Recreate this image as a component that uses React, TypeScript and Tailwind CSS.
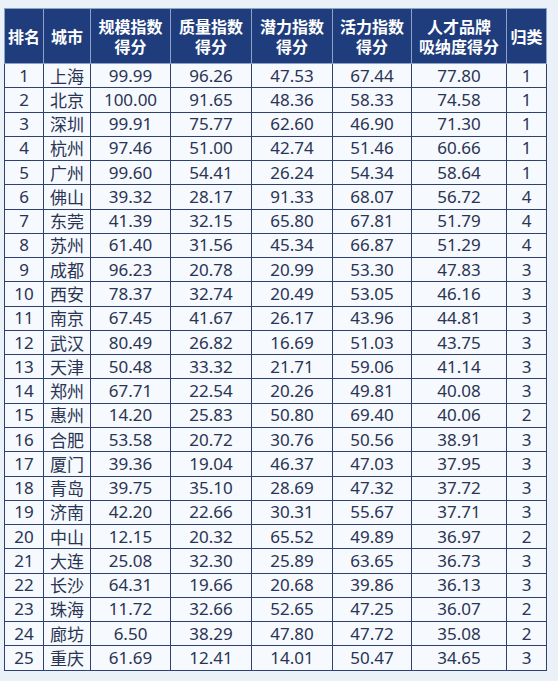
import React from "react";

const rows: [number, string, string, string, string, string, string, number][] = [
  [1, "上海", "99.99", "96.26", "47.53", "67.44", "77.80", 1],
  [2, "北京", "100.00", "91.65", "48.36", "58.33", "74.58", 1],
  [3, "深圳", "99.91", "75.77", "62.60", "46.90", "71.30", 1],
  [4, "杭州", "97.46", "51.00", "42.74", "51.46", "60.66", 1],
  [5, "广州", "99.60", "54.41", "26.24", "54.34", "58.64", 1],
  [6, "佛山", "39.32", "28.17", "91.33", "68.07", "56.72", 4],
  [7, "东莞", "41.39", "32.15", "65.80", "67.81", "51.79", 4],
  [8, "苏州", "61.40", "31.56", "45.34", "66.87", "51.29", 4],
  [9, "成都", "96.23", "20.78", "20.99", "53.30", "47.83", 3],
  [10, "西安", "78.37", "32.74", "20.49", "53.05", "46.16", 3],
  [11, "南京", "67.45", "41.67", "26.17", "43.96", "44.81", 3],
  [12, "武汉", "80.49", "26.82", "16.69", "51.03", "43.75", 3],
  [13, "天津", "50.48", "33.32", "21.71", "59.06", "41.14", 3],
  [14, "郑州", "67.71", "22.54", "20.26", "49.81", "40.08", 3],
  [15, "惠州", "14.20", "25.83", "50.80", "69.40", "40.06", 2],
  [16, "合肥", "53.58", "20.72", "30.76", "50.56", "38.91", 3],
  [17, "厦门", "39.36", "19.04", "46.37", "47.03", "37.95", 3],
  [18, "青岛", "39.75", "35.10", "28.69", "47.32", "37.72", 3],
  [19, "济南", "42.20", "22.66", "30.31", "55.67", "37.71", 3],
  [20, "中山", "12.15", "20.32", "65.52", "49.89", "36.97", 2],
  [21, "大连", "25.08", "32.30", "25.89", "63.65", "36.73", 3],
  [22, "长沙", "64.31", "19.66", "20.68", "39.86", "36.13", 3],
  [23, "珠海", "11.72", "32.66", "52.65", "47.25", "36.07", 2],
  [24, "廊坊", "6.50", "38.29", "47.80", "47.72", "35.08", 2],
  [25, "重庆", "61.69", "12.41", "14.01", "50.47", "34.65", 3],
];

const headers: string[][] = [
  ["排名"],
  ["城市"],
  ["规模指数", "得分"],
  ["质量指数", "得分"],
  ["潜力指数", "得分"],
  ["活力指数", "得分"],
  ["人才品牌", "吸纳度得分"],
  ["归类"],
];

// column widths, written out so tailwind picks them up
const colClasses = [
  "w-[39px]",
  "w-[47px]",
  "w-[80px]",
  "w-[81px]",
  "w-[81px]",
  "w-[79px]",
  "w-[95px]",
  "w-[40px]",
];

export default function App() {
  return (
    <div className="w-[558px] h-[681px] bg-[#eaf1f9] pt-[8px] pl-[4px] font-['Noto_Sans','Noto_Sans_CJK_SC',sans-serif]">
      <table className="border-collapse border-[1.5px] border-[#2b3d6d] table-fixed w-[542px]">
        <colgroup>
          {colClasses.map((c, i) => (
            <col key={i} className={c} />
          ))}
        </colgroup>
        <thead>
          <tr className="h-[55px] bg-[#1f3d7d]">
            {headers.map((h, i) => (
              <th
                key={i}
                className="border border-[#8ea2c8] p-0 text-white font-bold text-[16px] leading-[20px] text-center font-['Noto_Sans_CJK_SC',sans-serif]"
              >
                {h.map((line, j) => (
                  <div key={j}>{line}</div>
                ))}
              </th>
            ))}
          </tr>
        </thead>
        <tbody className="bg-[#f6f9fd] text-[#2a3453]">
          {rows.map((r) => (
            <tr key={r[0]} className="h-[24.28px]">
              {r.map((c, i) => (
                <td
                  key={i}
                  className={
                    i === 1
                      ? "border border-[#2f4170] p-0 text-center text-[17px] leading-[22px] font-['Noto_Sans_CJK_SC',sans-serif]"
                      : "border border-[#2f4170] p-0 text-center text-[17px] leading-[22px]"
                  }
                >
                  {c}
                </td>
              ))}
            </tr>
          ))}
        </tbody>
      </table>
    </div>
  );
}
